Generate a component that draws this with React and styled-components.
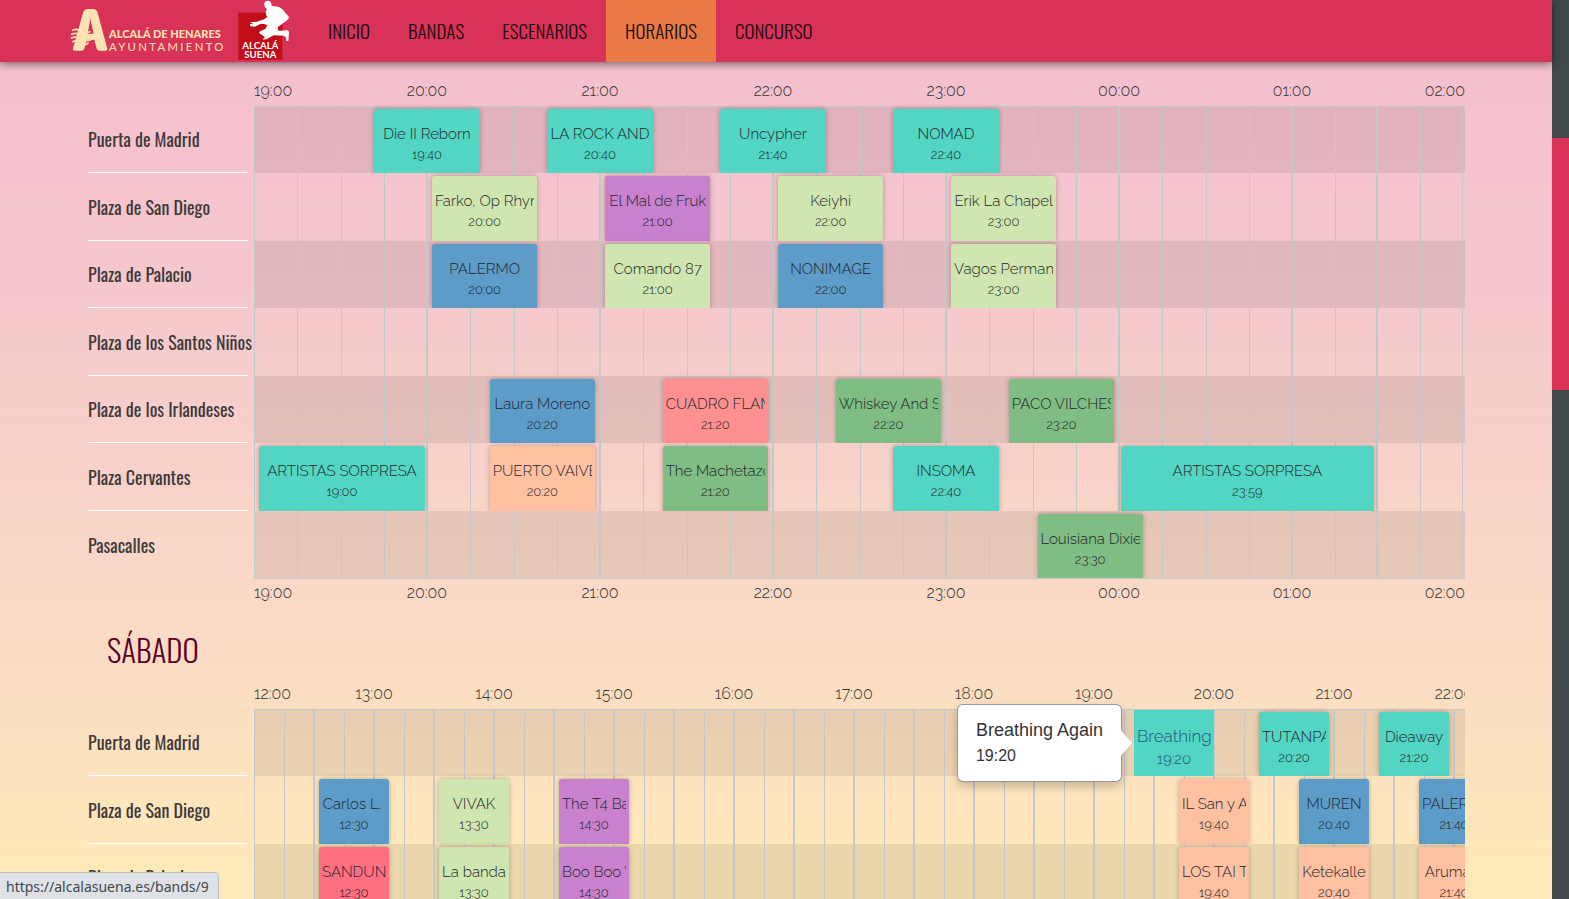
import React from 'react';
import styled, { createGlobalStyle, css } from 'styled-components';

const condensed = '"Oswald", "Liberation Sans Narrow", "Roboto Condensed", "Liberation Sans", sans-serif';
const body = '"Raleway", "Lato", "Open Sans", sans-serif';

const colors = {
  teal: '#52d5c2',
  lime: '#d0e6b0',
  purple: '#c981cd',
  blue: '#5d9cc9',
  coral: '#ff9090',
  green: '#7fbd84',
  peach: '#ffc1a2',
  red: '#ff6f82',
};

const GlobalStyle = createGlobalStyle`
  * { box-sizing: border-box; }
  body { margin: 0; font-family: ${body}; color: #333; }
`;

const Window = styled.div`
  display: flex;
  height: 100vh;
  overflow: hidden;
`;

const Page = styled.div`
  position: relative;
  display: flex;
  flex-direction: column;
  flex: 1;
  min-width: 0;
  background: linear-gradient(#f5bdcf, #f5c8cd 33%, #fad9c6 67%, #fee9ba 97%);
`;

const ScrollTrack = styled.div`
  display: flex;
  flex-direction: column;
  width: 17px;
  background: #3f484a;
`;
const ScrollSpace = styled.div`
  flex: ${(p) => p.$share};
`;
const ScrollThumb = styled.div`
  flex: 252;
  background: #d93257;
`;

const Header = styled.header`
  position: relative;
  z-index: 5;
  display: flex;
  flex: none;
  height: 62px;
  padding-left: 70px;
  background: #d93257;
  box-shadow: 0 2px 8px rgba(0, 0, 0, 0.5);
`;
const LogoLink = styled.a`
  display: block;
  margin-right: ${(p) => p.$gap}px;
  svg { display: block; }
`;
const Nav = styled.nav`
  display: flex;
`;
const NavLink = styled.a`
  display: flex;
  align-items: center;
  padding: 0 19px 2px;
  font: 300 19px ${condensed};
  text-transform: uppercase;
  text-decoration: none;
  color: #1a0c10;
  background: ${(p) => (p.$active ? '#ea7a45' : 'transparent')};
`;

const Main = styled.main`
  flex: 1;
  min-height: 0;
  overflow: hidden;
  padding: 14px 87px 0 88px;
`;
const DayTitle = styled.h2`
  margin: 0;
  padding: 17px 0 6px 19px;
  font: 300 31px/48px ${condensed};
  text-transform: uppercase;
  color: #5c0026;
`;
const Schedule = styled.section`
  display: flex;
  gap: 6px;
`;
const StageList = styled.ul`
  flex: none;
  width: 160px;
  margin: 0;
  padding: 30px 0 0;
  list-style: none;
`;
const rowHeight = css`
  height: 67px;
  &:nth-child(even) { height: 68px; }
`;
const Stage = styled.li`
  ${rowHeight}
  display: flex;
  align-items: center;
  font: 400 18px ${condensed};
  white-space: nowrap;
  color: #3d3a3a;
  border-bottom: 1px solid #fff;
  &:last-child { border-bottom: 0; }
`;
const Timeline = styled.div`
  flex: 1;
  min-width: 0;
  overflow: hidden;
`;
const Track = styled.div`
  width: ${(p) => p.$width};
`;
const Axis = styled.div`
  display: flex;
  justify-content: space-between;
  height: 30px;
  font-size: 16px;
  font-weight: 300;
  line-height: 30px;
`;
const Tick = styled.span`
  display: flex;
  justify-content: center;
  width: 0;
  white-space: nowrap;
  &:first-child { justify-content: flex-start; }
  &:last-child { justify-content: flex-end; }
`;
const Board = styled.div`
  display: grid;
  border-bottom: 1px solid #c3c8c9;
  margin-bottom: -1px;
  > * { grid-area: 1 / 1; }
`;
const Hours = styled.div`
  position: relative;
  z-index: 1;
  pointer-events: none;
  display: grid;
  grid-template-columns: repeat(${(p) => p.$count}, minmax(0, 1fr));
  border-top: 1px solid #c3c8c9;
`;
const Hour = styled.div`
  display: grid;
  grid-template-columns: repeat(4, 1fr);
  &:last-child {
    margin-right: 2px;
    border-right: 1px solid #c3c8c9;
  }
`;
const Quarter = styled.div`
  border-left: ${(p) => (p.$strong ? 2 : 1)}px solid #c3c8c9;
  margin-left: ${(p) => (p.$strong ? -1 : 0)}px;
`;
const Rows = styled.div`
  min-width: 0;
`;
const Row = styled.div`
  ${rowHeight}
  display: grid;
  grid-template-columns: repeat(${(p) => p.$minutes}, 1fr);
  grid-template-rows: 100%;
  &:nth-child(odd) { background: rgba(0, 0, 0, 0.075); }
`;
const Slot = styled.div`
  position: relative;
  z-index: ${(p) => (p.$hover ? 3 : 2)};
  min-width: 0;
  padding: ${(p) => (p.$hover ? '1px 0 0' : '3px 5px 0')};
`;
const Concert = styled.a`
  display: block;
  height: 100%;
  padding: 13px 3px 0;
  text-align: center;
  text-decoration: none;
  color: #222628;
  background: ${(p) => colors[p.$color]};
  border-radius: 3px 3px 0 0;
  box-shadow: 0 0 5px rgba(0, 0, 0, 0.28);
  clip-path: inset(-5px -5px 0 -5px);
  ${(p) =>
    p.$hover &&
    css`
      padding-top: 14px;
      color: #23527c;
      border-radius: 0;
      box-shadow: none;
    `}
`;
const Band = styled.span`
  display: block;
  overflow: hidden;
  white-space: pre;
  font-size: ${(p) => (p.$hover ? 17 : 15)}px;
  font-weight: 300;
  line-height: 24px;
`;
const Time = styled.time`
  display: block;
  font-size: ${(p) => (p.$hover ? 15 : 13)}px;
  font-weight: 350;
  line-height: ${(p) => (p.$hover ? 22 : 18)}px;
`;
const Tooltip = styled.div`
  position: absolute;
  z-index: 3;
  right: calc(100% + 12px);
  top: 50%;
  transform: translateY(-50%);
  padding: 12px 18px;
  font: 18px/26px "Liberation Sans", sans-serif;
  white-space: nowrap;
  color: #333;
  background: #fff;
  border: 1px solid rgba(0, 0, 0, 0.4);
  border-radius: 6px;
  box-shadow: 0 5px 10px rgba(0, 0, 0, 0.2);
  svg {
    position: absolute;
    left: 100%;
    top: 50%;
    margin-top: -13px;
  }
`;
const TooltipTime = styled.div`
  font-size: 16px;
`;
const StatusBubble = styled.div`
  position: absolute;
  z-index: 6;
  left: 0;
  bottom: 0;
  height: 27px;
  padding: 0 9px 0 6px;
  font: 14px/27px "Noto Sans", sans-serif;
  color: #44484c;
  background: #dee1e6;
  border: solid #bfc0b8;
  border-width: 1px 1px 0 0;
  border-radius: 0 5px 0 0;
`;

function CityLogo() {
  return (
    <svg width="155" height="62" viewBox="30 0 465 186" role="img" aria-label="Ayuntamiento de Alcalá de Henares">
      <path fill="#fce3b4" fillRule="evenodd" d="M70 35Q74 27 82 27H101Q109 27 112 35L142 146Q143 151 137 152H118Q112 152 110 146L103 119H80L73 146Q71 152 64 152H45Q37 152 39 145ZM91 56L83 101H101Z" />
      <g fill="none" stroke="#fce3b4" strokeWidth="5" strokeLinecap="round">
        <path d="M38 91Q50 84 62 93T90 95" />
        <path d="M35 103Q49 96 62 105T92 107" />
        <path d="M34 114Q48 107 62 117T100 116" />
        <path d="M38 125Q48 119 62 129T84 129" />
      </g>
      <g fill="#fce3b4" fontFamily="Lato, sans-serif">
        <text x="147" y="115" fontSize="33" fontWeight="900">ALCALÁ DE HENARES</text>
        <text x="147" y="152" fontSize="34" letterSpacing="7">AYUNTAMIENTO</text>
      </g>
    </svg>
  );
}

function FestivalLogo() {
  return (
    <svg width="54" height="62" viewBox="528 0 162 186" role="img" aria-label="Alcalá Suena">
      <path fill="#c10e18" d="M535 38H667V179H535Z" />
      <g fill="#fff">
        <path d="M612 12Q614 3 623 2Q633 3 634 12Q634 20 641 19Q657 18 667 28L685 49Q689 54 682 60L655 80Q650 88 657 92L682 91Q688 92 687 99L685 123L678 122Q681 112 672 107L641 106L621 117L610 119Q609 114 615 111L598 100Q596 96 602 93L616 87L622 76Q609 68 596 74L585 80L572 79Q568 76 571 72L580 72L570 67L590 65L613 58L622 51Q613 39 621 28Q613 22 612 12Z" />
        <g fontFamily="Lato, sans-serif" fontSize="29" fontWeight="700" textAnchor="middle">
          <text x="601" y="147">ALCALÁ</text>
          <text x="601" y="174">SUENA</text>
        </g>
      </g>
    </svg>
  );
}

const stages = [
  'Puerta de Madrid',
  'Plaza de San Diego',
  'Plaza de Palacio',
  'Plaza de los Santos Niños',
  'Plaza de los Irlandeses',
  'Plaza Cervantes',
  'Pasacalles',
];

const friday = [
  [['Die II Reborn', '19:40', 'teal'], ['LA ROCK AND', '20:40', 'teal'], ['Uncypher', '21:40', 'teal'], ['NOMAD', '22:40', 'teal']],
  [['Farko, Op Rhyme', '20:00', 'lime'], ['El Mal de Fruk', '21:00', 'purple'], ['Keiyhi', '22:00', 'lime'], ['Erik La Chapel', '23:00', 'lime']],
  [['PALERMO', '20:00', 'blue'], ['Comando 87', '21:00', 'lime'], ['NONIMAGE', '22:00', 'blue'], ['Vagos Perman', '23:00', 'lime']],
  [],
  [['Laura Moreno', '20:20', 'blue'], ['CUADRO FLAMENCO', '21:20', 'coral'], ['Whiskey And S', '22:20', 'green'], ['PACO VILCHES', '23:20', 'green']],
  [['ARTISTAS SORPRESA', '19:00', 'teal', 61], ['PUERTO VAIVEN', '20:20', 'peach'], ['The Machetazo', '21:20', 'green'], ['INSOMA', '22:40', 'teal'], ['ARTISTAS SORPRESA', '23:59', 'teal', 91]],
  [['Louisiana Dixie', '23:30', 'green']],
];

const saturday = [
  [['Breathing Again', '19:20', 'teal', 40, true], ['TUTANPA', '20:20', 'teal'], ['Dieaway', '21:20', 'teal']],
  [['Carlos L. ', '12:30', 'blue'], ['VIVAK', '13:30', 'lime'], ['The T4 Band', '14:30', 'purple'], ['IL San y A', '19:40', 'peach'], ['MUREN', '20:40', 'blue'], ['PALERMO', '21:40', 'blue']],
  [['SANDUN', '12:30', 'red'], ['La banda', '13:30', 'lime'], ['Boo Boo V', '14:30', 'purple'], ['LOS TAI T', '19:40', 'peach'], ['Ketekalle', '20:40', 'peach'], ['Aruma T', '21:40', 'peach']],
  [], [], [], [],
];

const clock = (h) => `${String(h % 24).padStart(2, '0')}:00`;
const range = (n) => Array.from({ length: n }, (_, i) => i);

function Day({ start, hours, rows, width, isStrong }) {
  const axis = (
    <Axis>
      {range(hours + 1).map((i) => <Tick key={i}>{clock(start + i)}</Tick>)}
    </Axis>
  );
  const column = (time, duration) => {
    const [h, m] = time.split(':').map(Number);
    return `${(h - start) * 60 + m + 1} / span ${duration}`;
  };
  return (
    <Schedule>
      <StageList>
        {stages.map((s) => <Stage key={s}>{s}</Stage>)}
      </StageList>
      <Timeline>
        <Track $width={width}>
          {axis}
          <Board>
            <Hours $count={hours}>
              {range(hours).map((h) => (
                <Hour key={h}>
                  {range(4).map((q) => <Quarter key={q} $strong={isStrong(h, q)} />)}
                </Hour>
              ))}
            </Hours>
            <Rows>
              {rows.map((row, i) => (
                <Row key={stages[i]} $minutes={hours * 60}>
                  {row.map(([band, time, color, duration = 40, hover]) => (
                    <Slot key={time} $hover={hover} style={{ gridColumn: column(time, duration), gridRow: 1 }}>
                      <Concert href="#" $color={color} $hover={hover}>
                        <Band $hover={hover}>{band}</Band>
                        <Time $hover={hover}>{time}</Time>
                      </Concert>
                      {hover && (
                        <Tooltip role="tooltip">
                          <div>{band}</div>
                          <TooltipTime>{time}</TooltipTime>
                          <svg width="13" height="26" viewBox="0 0 13 26">
                            <path d="M0 0L13 13L0 26Z" fill="#fff" />
                            <path d="M1 1L12 13L1 25" fill="none" stroke="#000" strokeOpacity="0.25" />
                          </svg>
                        </Tooltip>
                      )}
                    </Slot>
                  ))}
                </Row>
              ))}
            </Rows>
          </Board>
          {axis}
        </Track>
      </Timeline>
    </Schedule>
  );
}

const menu = ['Inicio', 'Bandas', 'Escenarios', 'Horarios', 'Concurso'];

export default function App() {
  return (
    <Window>
      <GlobalStyle />
      <Page>
        <Header>
          <LogoLink href="#" $gap={11}><CityLogo /></LogoLink>
          <LogoLink href="#" $gap={19}><FestivalLogo /></LogoLink>
          <Nav>
            {menu.map((m) => <NavLink key={m} href="#" $active={m === 'Horarios'}>{m}</NavLink>)}
          </Nav>
        </Header>
        <Main>
          <Day
            start={19}
            hours={7}
            rows={friday}
            width="100%"
            isStrong={(h, q) => (h > 0 && q === 0) || (h === 6 && q === 2)}
          />
          <DayTitle>Sábado</DayTitle>
          <Day
            start={12}
            hours={14}
            rows={saturday}
            width="1680px"
            isStrong={(h, q) => (h > 0 && q === 0) || q === 2}
          />
        </Main>
        <StatusBubble>https://alcalasuena.es/bands/9</StatusBubble>
      </Page>
      <ScrollTrack>
        <ScrollSpace $share={138} />
        <ScrollThumb />
        <ScrollSpace $share={509} />
      </ScrollTrack>
    </Window>
  );
}
